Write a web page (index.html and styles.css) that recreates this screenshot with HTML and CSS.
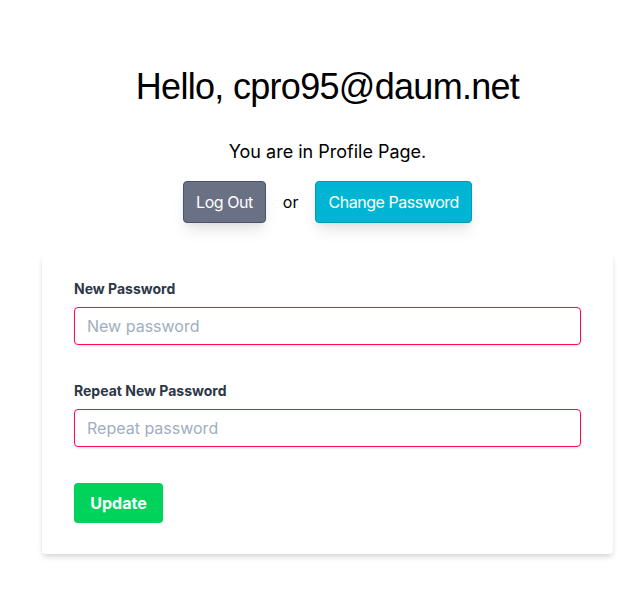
FILE: index.html
```html
<!DOCTYPE html>
<html>
<head>
<meta charset="utf-8">
<link rel="stylesheet" href="styles.css">
</head>
<body>
<main class="page">
  <h1 class="title">Hello, cpro95@daum.net</h1>
  <p class="subtitle">You are in Profile Page.</p>
  <div class="actions">
    <button class="btn btn-gray">Log Out</button>
    <span class="or">or</span>
    <button class="btn btn-cyan">Change Password</button>
  </div>
  <form class="card">
    <div class="field">
      <label class="label">New Password</label>
      <input class="input" type="password" placeholder="New password">
    </div>
    <div class="field">
      <label class="label">Repeat New Password</label>
      <input class="input" type="password" placeholder="Repeat password">
    </div>
    <button class="btn-update" type="button">Update</button>
  </form>
</main>
</body>
</html>
```

FILE: styles.css
```css
html, body {
  margin: 0;
  padding: 0;
  background: #fff;
}
body {
  font-family: Inter, "Noto Sans", sans-serif;
  color: #000;
}
.page {
  padding-left: 14px;
  padding-bottom: 30px;
  display: flex;
  flex-direction: column;
  align-items: center;
}
.title {
  margin: 67px 0 0;
  font-family: "Liberation Sans", Arial, sans-serif;
  font-size: 36px;
  line-height: 40px;
  font-weight: 400;
  letter-spacing: -0.7px;
}
.subtitle {
  margin: 31px 0 0;
  font-size: 18px;
  line-height: 28px;
}
.actions {
  margin-top: 15px;
  display: flex;
  align-items: center;
  gap: 17px;
}
.btn {
  font-family: inherit;
  font-size: 16px;
  line-height: 24px;
  letter-spacing: -0.45px;
  color: #fff;
  height: 42px;
  padding: 0 12px;
  border-radius: 4px;
  border: 1px solid;
  box-shadow: 0 10px 15px -3px rgba(0,0,0,0.1), 0 4px 6px -2px rgba(0,0,0,0.05);
}
.btn-gray {
  background: #6b7184;
  border-color: #4a5568;
}
.btn-cyan {
  background: #00b5d4;
  border-color: #009ab6;
}
.or {
  font-size: 16px;
}
.card {
  margin-top: 31px;
  width: 571px;
  box-sizing: border-box;
  background: #fff;
  border-radius: 4px;
  box-shadow: 0 4px 6px -1px rgba(0,0,0,0.12), 0 2px 4px -1px rgba(0,0,0,0.08);
  padding: 25px 32px 31px;
}
.field {
  margin-bottom: 36px;
}
.label {
  display: block;
  font-size: 14px;
  line-height: 20px;
  font-weight: 700;
  color: #2d3748;
  margin-bottom: 8px;
}
.input {
  display: block;
  width: 100%;
  box-sizing: border-box;
  height: 38px;
  border: 1px solid #ff0a50;
  border-radius: 4px;
  padding: 0 12px;
  font-family: inherit;
  font-size: 16px;
  color: #4a5568;
  box-shadow: 0 1px 3px 0 rgba(0,0,0,0.1);
}
.input::placeholder {
  color: #a0aec0;
}
.btn-update {
  display: block;
  height: 40px;
  width: 89px;
  border: none;
  border-radius: 4px;
  background: #00d35c;
  color: #fff;
  font-family: inherit;
  font-size: 16px;
  font-weight: 700;
}
```
